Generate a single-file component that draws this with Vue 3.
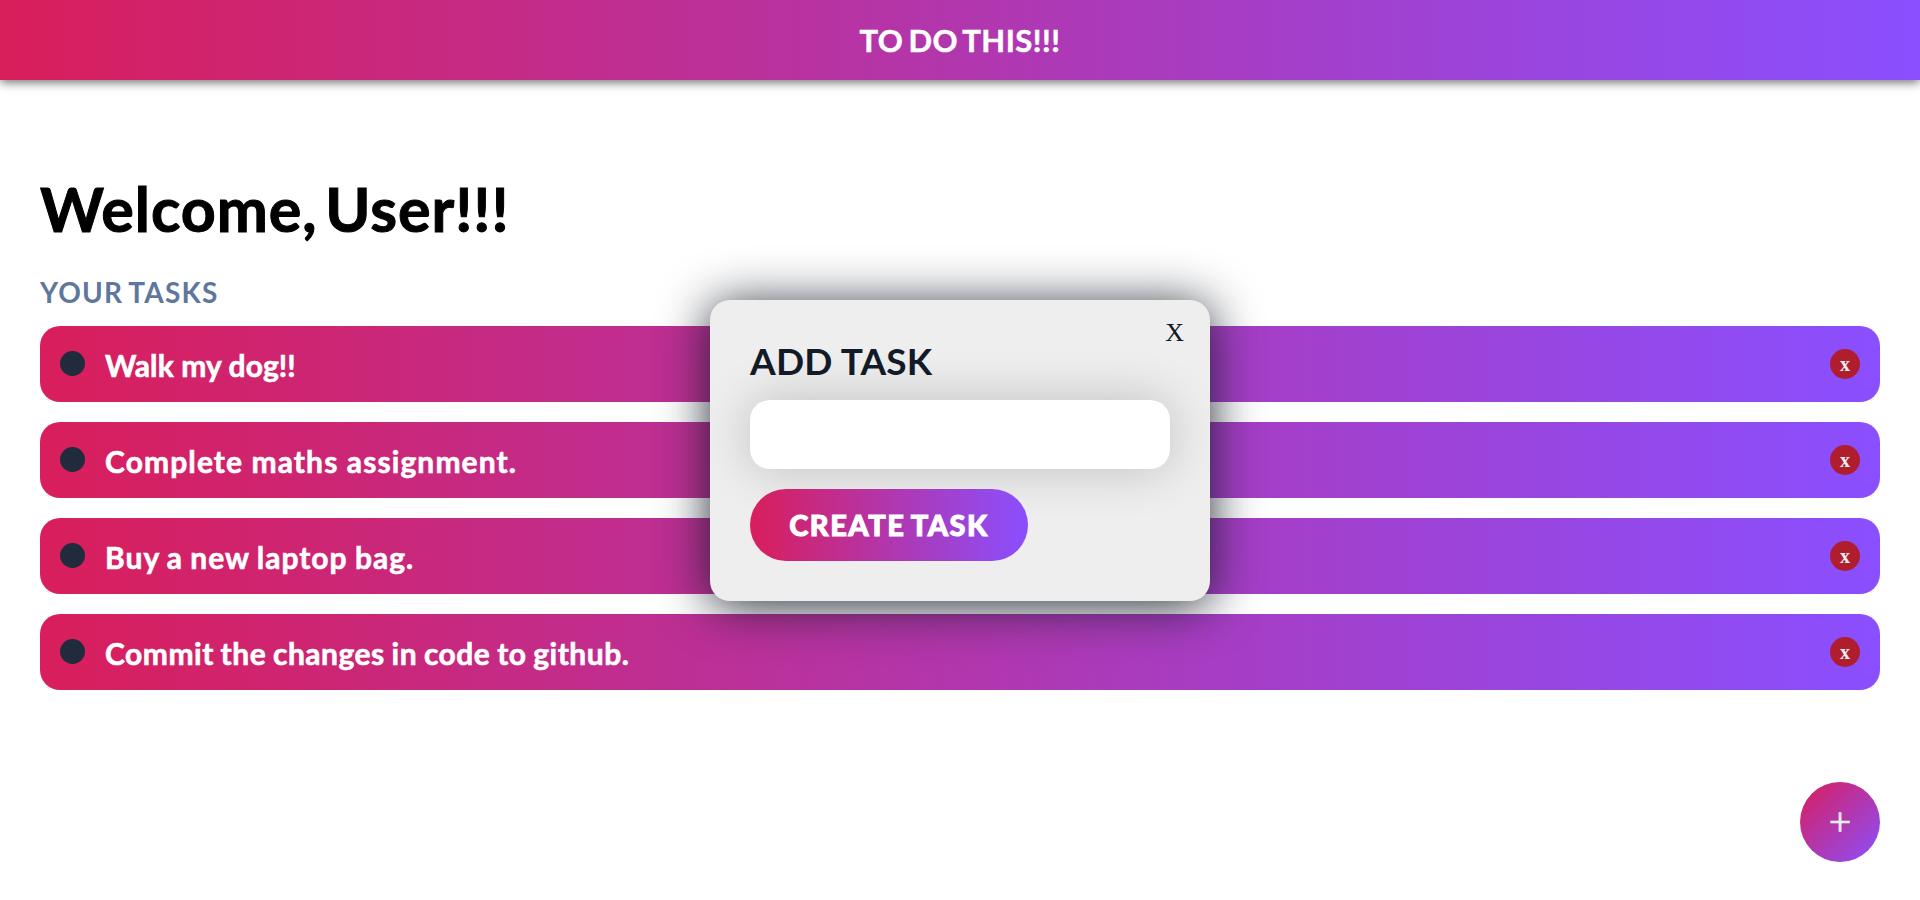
<script setup>
import { ref } from 'vue'

const tasks = ref([
  { id: 1, text: 'Walk my dog!!', fit: 'tight' },
  { id: 2, text: 'Complete maths assignment.', fit: 'wide' },
  { id: 3, text: 'Buy a new laptop bag.', fit: 'medium' },
  { id: 4, text: 'Commit the changes in code to github.', fit: 'normal' },
])
const draft = ref('')
const open = ref(true)

function addTask() {
  if (!draft.value.trim()) return
  tasks.value.push({ id: Date.now(), text: draft.value, fit: 'normal' })
  draft.value = ''
  open.value = false
}
function removeTask(id) {
  tasks.value = tasks.value.filter((t) => t.id !== id)
}
</script>

<template>
  <div class="page">
    <header class="bar">TO DO THIS!!!</header>
    <main class="content">
      <h1 class="welcome">Welcome, User!!!</h1>
      <h2 class="subtitle">YOUR TASKS</h2>
      <ul class="list">
        <li v-for="t in tasks" :key="t.id" class="task">
          <span class="dot"></span>
          <span class="label" :class="t.fit">{{ t.text }}</span>
          <button class="remove" @click="removeTask(t.id)">x</button>
        </li>
      </ul>
    </main>
    <button class="fab" @click="open = true"><span>+</span></button>
    <div v-if="open" class="modal">
      <button class="close" @click="open = false">X</button>
      <h3 class="modal-title">ADD TASK</h3>
      <input v-model="draft" class="field" type="text" />
      <button class="create" @click="addTask">CREATE TASK</button>
    </div>
  </div>
</template>

<style>
body {
  margin: 0;
  background: #fff;
}
</style>

<style scoped>
.page {
  position: relative;
  height: 900px;
  overflow: hidden;
  font-family: Lato, sans-serif;
  font-weight: 700;
}
button {
  border: 0;
  padding: 0;
  cursor: pointer;
}
.bar {
  box-sizing: border-box;
  height: 80px;
  line-height: 81px;
  text-align: center;
  font-size: 31px;
  letter-spacing: 0.5px;
  word-spacing: -3px;
  color: #fff;
  -webkit-text-stroke: 0.5px #fff;
  background: linear-gradient(to right, #d91e5b, #8a4fff);
  box-shadow: 0 2px 10px rgba(0, 0, 0, 0.6);
}
.content {
  padding: 93px 40px 0;
}
.welcome {
  margin: 0;
  font-size: 61px;
  line-height: 72px;
  letter-spacing: 0.95px;
  word-spacing: -8px;
  color: #000;
  -webkit-text-stroke: 1px #000;
}
.subtitle {
  margin: 27px 0 14px;
  font-size: 28px;
  line-height: 40px;
  letter-spacing: 1.2px;
  word-spacing: -2px;
  color: #5f779d;
}
.list {
  display: flex;
  flex-direction: column;
  gap: 20px;
  margin: 0;
  padding: 0;
  list-style: none;
}
.task {
  box-sizing: border-box;
  display: flex;
  align-items: center;
  height: 76px;
  padding: 0 20px;
  border-radius: 20px;
  background: linear-gradient(to right, #d91e5b, #8a4fff);
}
.dot {
  width: 25px;
  height: 25px;
  margin: 0 20px 1px 0;
  border-radius: 50%;
  background: #202c3c;
}
.label {
  flex: 1;
  padding-top: 1px;
  font-size: 30px;
  line-height: 40px;
  color: #fff;
  -webkit-text-stroke: 0.6px #fff;
}
.tight {
  letter-spacing: 0.1px;
}
.normal {
  letter-spacing: 0.5px;
  word-spacing: -1px;
}
.medium {
  letter-spacing: 1px;
  word-spacing: -1px;
}
.wide {
  letter-spacing: 1.1px;
}
.remove {
  width: 30px;
  height: 30px;
  border-radius: 50%;
  font: 700 20px/27px 'Liberation Serif', serif;
  color: #eee;
  background: #b01e2e;
}
.fab {
  position: absolute;
  right: 40px;
  bottom: 38px;
  width: 80px;
  height: 80px;
  border-radius: 50%;
  font: 400 40px/80px 'Liberation Serif', serif;
  color: #eee;
  -webkit-text-stroke: 0.6px #eee;
  background: linear-gradient(to bottom right, #d91e5b, #8a4fff);
}
.modal {
  position: absolute;
  top: 300.4px;
  left: 710px;
  box-sizing: border-box;
  display: flex;
  flex-direction: column;
  align-items: flex-start;
  width: 500px;
  height: 301px;
  padding: 39.5px 40px 40px;
  border-radius: 20px;
  background: #eee;
  box-shadow: 0 5px 50px rgba(24, 30, 42, 0.95);
}
.close {
  position: absolute;
  top: 18px;
  right: 26px;
  font: 400 26px/30px 'Liberation Serif', serif;
  color: #111826;
  background: none;
}
.modal-title {
  margin: 0 0 19px;
  font-size: 37px;
  line-height: 41px;
  letter-spacing: 0.2px;
  color: #141b28;
}
.field {
  box-sizing: border-box;
  width: 420px;
  height: 69px;
  padding: 0 20px;
  border: 0;
  border-radius: 20px;
  outline: 0;
  font: 700 30px Lato, sans-serif;
  background: #fff;
  box-shadow: 0 0 50px rgba(0, 0, 0, 0.2);
}
.create {
  width: 278px;
  height: 72px;
  margin-top: 20px;
  border-radius: 36px;
  font: 900 29px/72px Lato, sans-serif;
  letter-spacing: 1.5px;
  word-spacing: -2px;
  color: #fff;
  -webkit-text-stroke: 1px #fff;
  background: linear-gradient(to right, #d91e5b, #8a4fff);
}
</style>
